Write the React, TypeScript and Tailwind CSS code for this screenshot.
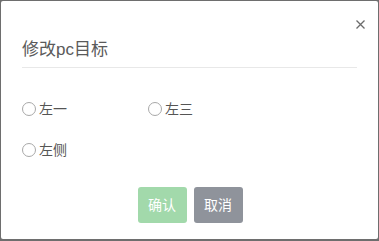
import React from "react";

function Radio({ label }: { label: string }) {
  return (
    <label className="flex items-center h-[20px]">
      <span className="w-[14px] h-[14px] rounded-full border border-[#a8a8a8] bg-white" />
      <span className="ml-[3px] text-[14px] leading-[20px] text-[#555]">{label}</span>
    </label>
  );
}

export default function App() {
  return (
    <div
      className="w-[379px] h-[241px] bg-[#6e6e6e] pt-[1px] pl-[1px]"
      style={{ fontFamily: '"Liberation Sans", "Noto Sans CJK SC", sans-serif' }}
    >
      <div className="relative w-[377px] h-[238px] bg-white rounded-[2px] flex flex-col">
        <button className="absolute right-[13px] top-[18px] w-[10px] h-[10px] flex items-center justify-center">
          <svg width="9" height="9" viewBox="0 0 9 9" fill="none" stroke="#6b6b6b" strokeWidth="1.3">
            <path d="M0.5 0.5 L8.5 8.5 M8.5 0.5 L0.5 8.5" />
          </svg>
        </button>
        <div className="mx-[21px] pt-[37px] pb-[5px] border-b border-[#e8e8e8]">
          <div className="text-[17px] leading-[24px] text-[#5a5a5a]">修改pc目标</div>
        </div>
        <div className="mx-[21px] mt-[31px] flex flex-col gap-[21px]">
          <div className="flex">
            <div className="w-[126px]">
              <Radio label="左一" />
            </div>
            <Radio label="左三" />
          </div>
          <div className="flex">
            <Radio label="左侧" />
          </div>
        </div>
        <div className="mt-[27px] flex justify-center gap-[7px] pl-[1px]">
          <button className="w-[49px] h-[36px] rounded-[3px] bg-[#a2d9ab] text-white text-[14px]">确认</button>
          <button className="w-[49px] h-[36px] rounded-[3px] bg-[#8f939b] text-white text-[14px]">取消</button>
        </div>
      </div>
    </div>
  );
}
